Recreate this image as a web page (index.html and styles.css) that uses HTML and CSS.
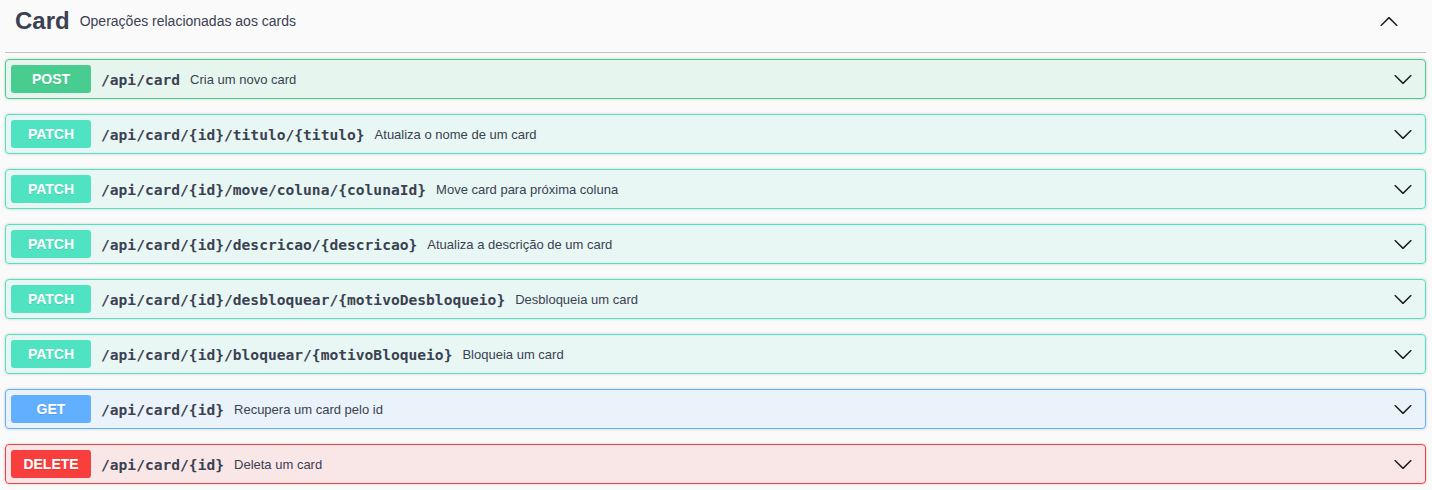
FILE: index.html
```html
<!DOCTYPE html>
<html lang="pt">
<head>
<meta charset="utf-8">
<title>Card</title>
<link rel="stylesheet" href="styles.css">
</head>
<body>
<div class="section">
  <div class="tag">
    <h3 class="tag-title">Card</h3>
    <span class="tag-desc">Operações relacionadas aos cards</span>
    <svg class="arrow arrow-up" viewBox="0 0 20 20" width="20" height="20"><path d="M17.418 14.908c.272.268.709.268.979 0s.271-.701 0-.969l-7.908-7.83c-.27-.268-.707-.268-.979 0l-7.908 7.83c-.27.268-.27.701 0 .969.271.268.709.268.979 0L10 7.767l7.418 7.141z"/></svg>
  </div>

  <div class="op op-post">
    <span class="method">POST</span>
    <span class="path">/api/card</span>
    <span class="desc">Cria um novo card</span>
    <svg class="arrow" viewBox="0 0 20 20" width="20" height="20"><path d="M17.418 6.109c.272-.268.709-.268.979 0s.271.701 0 .969l-7.908 7.83c-.27.268-.707.268-.979 0l-7.908-7.83c-.27-.268-.27-.701 0-.969.271-.268.709-.268.979 0L10 13.25l7.418-7.141z"/></svg>
  </div>

  <div class="op op-patch">
    <span class="method">PATCH</span>
    <span class="path">/api/card/{id}/titulo/{titulo}</span>
    <span class="desc">Atualiza o nome de um card</span>
    <svg class="arrow" viewBox="0 0 20 20" width="20" height="20"><path d="M17.418 6.109c.272-.268.709-.268.979 0s.271.701 0 .969l-7.908 7.83c-.27.268-.707.268-.979 0l-7.908-7.83c-.27-.268-.27-.701 0-.969.271-.268.709-.268.979 0L10 13.25l7.418-7.141z"/></svg>
  </div>

  <div class="op op-patch">
    <span class="method">PATCH</span>
    <span class="path">/api/card/{id}/move/coluna/{colunaId}</span>
    <span class="desc">Move card para próxima coluna</span>
    <svg class="arrow" viewBox="0 0 20 20" width="20" height="20"><path d="M17.418 6.109c.272-.268.709-.268.979 0s.271.701 0 .969l-7.908 7.83c-.27.268-.707.268-.979 0l-7.908-7.83c-.27-.268-.27-.701 0-.969.271-.268.709-.268.979 0L10 13.25l7.418-7.141z"/></svg>
  </div>

  <div class="op op-patch">
    <span class="method">PATCH</span>
    <span class="path">/api/card/{id}/descricao/{descricao}</span>
    <span class="desc">Atualiza a descrição de um card</span>
    <svg class="arrow" viewBox="0 0 20 20" width="20" height="20"><path d="M17.418 6.109c.272-.268.709-.268.979 0s.271.701 0 .969l-7.908 7.83c-.27.268-.707.268-.979 0l-7.908-7.83c-.27-.268-.27-.701 0-.969.271-.268.709-.268.979 0L10 13.25l7.418-7.141z"/></svg>
  </div>

  <div class="op op-patch">
    <span class="method">PATCH</span>
    <span class="path">/api/card/{id}/desbloquear/{motivoDesbloqueio}</span>
    <span class="desc">Desbloqueia um card</span>
    <svg class="arrow" viewBox="0 0 20 20" width="20" height="20"><path d="M17.418 6.109c.272-.268.709-.268.979 0s.271.701 0 .969l-7.908 7.83c-.27.268-.707.268-.979 0l-7.908-7.83c-.27-.268-.27-.701 0-.969.271-.268.709-.268.979 0L10 13.25l7.418-7.141z"/></svg>
  </div>

  <div class="op op-patch">
    <span class="method">PATCH</span>
    <span class="path">/api/card/{id}/bloquear/{motivoBloqueio}</span>
    <span class="desc">Bloqueia um card</span>
    <svg class="arrow" viewBox="0 0 20 20" width="20" height="20"><path d="M17.418 6.109c.272-.268.709-.268.979 0s.271.701 0 .969l-7.908 7.83c-.27.268-.707.268-.979 0l-7.908-7.83c-.27-.268-.27-.701 0-.969.271-.268.709-.268.979 0L10 13.25l7.418-7.141z"/></svg>
  </div>

  <div class="op op-get">
    <span class="method">GET</span>
    <span class="path">/api/card/{id}</span>
    <span class="desc">Recupera um card pelo id</span>
    <svg class="arrow" viewBox="0 0 20 20" width="20" height="20"><path d="M17.418 6.109c.272-.268.709-.268.979 0s.271.701 0 .969l-7.908 7.83c-.27.268-.707.268-.979 0l-7.908-7.83c-.27-.268-.27-.701 0-.969.271-.268.709-.268.979 0L10 13.25l7.418-7.141z"/></svg>
  </div>

  <div class="op op-delete">
    <span class="method">DELETE</span>
    <span class="path">/api/card/{id}</span>
    <span class="desc">Deleta um card</span>
    <svg class="arrow" viewBox="0 0 20 20" width="20" height="20"><path d="M17.418 6.109c.272-.268.709-.268.979 0s.271.701 0 .969l-7.908 7.83c-.27.268-.707.268-.979 0l-7.908-7.83c-.27-.268-.27-.701 0-.969.271-.268.709-.268.979 0L10 13.25l7.418-7.141z"/></svg>
  </div>
</div>
</body>
</html>
```

FILE: styles.css
```css
html, body {
  margin: 0;
  padding: 0;
  background: #fafafa;
}

body {
  font-family: "Liberation Sans", Arial, sans-serif;
  color: #3b4151;
}

.section {
  padding: 0 6px 0 5px;
}

.tag {
  display: flex;
  align-items: center;
  height: 42px;
  padding: 0 27px 10px 10px;
  border-bottom: 1px solid rgba(59, 65, 81, 0.3);
  margin-bottom: 6px;
}

.tag-title {
  margin: 0;
  font-size: 24px;
  font-weight: 700;
  color: #3b4151;
}

.tag-desc {
  padding: 0 10px;
  font-size: 14px;
  color: #3b4151;
  flex: 1;
}

.arrow {
  flex: none;
  fill: #1b1b1b;
}

.op {
  display: flex;
  align-items: center;
  height: 38px;
  padding: 0 12px 0 5px;
  margin-bottom: 15px;
  border: 1px solid;
  border-radius: 4px;
  box-shadow: 0 0 3px rgba(0, 0, 0, 0.19);
}

.method {
  flex: none;
  width: 80px;
  height: 28px;
  line-height: 28px;
  text-align: center;
  border-radius: 3px;
  color: #fff;
  font-size: 14px;
  font-weight: 700;
  text-shadow: 0 1px 0 rgba(0, 0, 0, 0.1);
}

.path {
  padding: 0 10px;
  font-family: "DejaVu Sans Mono", monospace;
  font-size: 14.6px;
  font-weight: 700;
  color: #3b4151;
}

.desc {
  flex: 1;
  font-size: 13px;
  color: #3b4151;
}

.op-post { background: rgba(73, 204, 144, 0.1); border-color: #49cc90; }
.op-post .method { background: #49cc90; }

.op-patch { background: rgba(80, 227, 194, 0.1); border-color: #50e3c2; }
.op-patch .method { background: #50e3c2; }

.op-get { background: rgba(97, 175, 254, 0.1); border-color: #61affe; }
.op-get .method { background: #61affe; }

.op-delete { background: rgba(249, 62, 62, 0.1); border-color: #f93e3e; }
.op-delete .method { background: #f93e3e; }
```
